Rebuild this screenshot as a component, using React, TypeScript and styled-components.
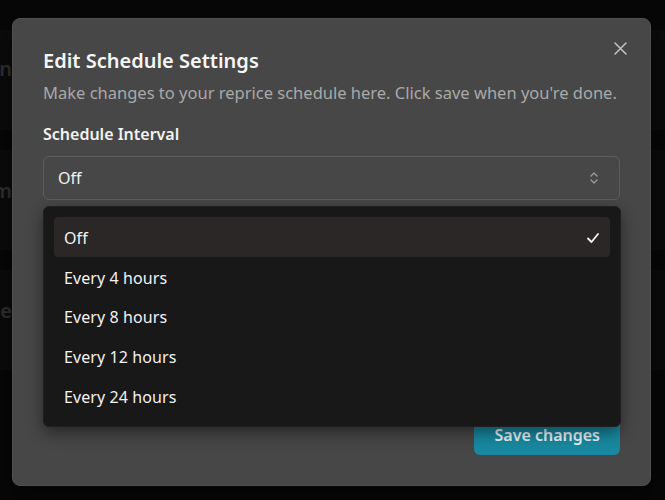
import React from "react";
import styled, { createGlobalStyle } from "styled-components";

const Global = createGlobalStyle`
  html, body { margin: 0; padding: 0; background: #0b0b0b; }
  body { font-family: "Noto Sans", "Open Sans", sans-serif; }
  * { box-sizing: border-box; }
`;

const Page = styled.div`
  position: relative;
  width: 665px;
  height: 500px;
  overflow: hidden;
  background: #0b0b0b;
  display: flex;
  flex-direction: column;
  gap: 20px;
  padding-top: 30px;
`;

const BgCard = styled.div`
  height: 100px;
  background: #121212;
  display: flex;
  align-items: center;
`;

const BgLabel = styled.div<{ $dy: number }>`
  width: 12px;
  overflow: hidden;
  display: flex;
  justify-content: flex-end;
  white-space: nowrap;
  color: #4c4c4c;
  font-size: 20px;
  font-weight: 600;
  margin-top: ${(p) => p.$dy}px;
`;

const Overlay = styled.div`
  position: absolute;
  inset: 0;
  background: rgba(0, 0, 0, 0.35);
`;

const Dialog = styled.div`
  position: absolute;
  left: 12px;
  top: 18px;
  width: 639px;
  height: 468px;
  background: #474747;
  border: 1px solid #505050;
  border-radius: 8px;
  padding: 28px 30px 30px 30px;
  display: flex;
  flex-direction: column;
  color: #f4f4f4;
  box-shadow: 0 10px 30px rgba(0, 0, 0, 0.5);
`;

const Close = styled.button`
  position: absolute;
  right: 22px;
  top: 21px;
  width: 16px;
  height: 16px;
  padding: 0;
  border: none;
  background: transparent;
  color: #c4c4c4;
  display: flex;
  align-items: center;
  justify-content: center;
`;

const Title = styled.h2`
  margin: 0;
  font-size: 20px;
  line-height: 28px;
  font-weight: 600;
  color: #f6f6f6;
`;

const Description = styled.p`
  margin: 6px 0 0 0;
  font-size: 16.5px;
  line-height: 24px;
  color: #a9a9a9;
`;

const Field = styled.div`
  position: relative;
  margin-top: 17px;
  display: flex;
  flex-direction: column;
  gap: 10px;
`;

const Label = styled.label`
  font-size: 16px;
  line-height: 24px;
  font-weight: 600;
  color: #f2f2f2;
`;

const Trigger = styled.button`
  height: 44px;
  width: 100%;
  border: 1px solid #5d5d5d;
  border-radius: 6px;
  background: #474747;
  color: #f2f2f2;
  font-family: inherit;
  font-size: 16px;
  padding: 0 20px 0 14px;
  display: flex;
  align-items: center;
  justify-content: space-between;
`;

const Content = styled.div`
  position: absolute;
  left: 0;
  right: -1px;
  top: 84px;
  height: 221px;
  background: #181818;
  border: 1px solid #202020;
  border-radius: 6px;
  padding: 10px 10px;
  display: flex;
  flex-direction: column;
  box-shadow: 0 6px 16px rgba(0, 0, 0, 0.45);
  z-index: 2;
`;

const Item = styled.div<{ $active?: boolean }>`
  height: 40px;
  border-radius: 4px;
  background: ${(p) => (p.$active ? "#2b2727" : "transparent")};
  display: flex;
  align-items: center;
  justify-content: space-between;
  padding: 2px 10px 0 10px;
  font-size: 16px;
  color: #f2f2f2;
  letter-spacing: 0.1px;
`;

const Body = styled.div`
  flex: 1;
`;

const Footer = styled.div`
  display: flex;
  justify-content: flex-end;
`;

const SaveButton = styled.button`
  height: 40px;
  padding: 0 20px;
  border: none;
  border-radius: 6px;
  background: #1889a0;
  color: #eaf6f8;
  font-family: inherit;
  font-size: 16px;
  font-weight: 600;
`;

const items = ["Off", "Every 4 hours", "Every 8 hours", "Every 12 hours", "Every 24 hours"];

export default function App() {
  return (
    <>
      <Global />
      <Page>
        <BgCard>
          <BgLabel $dy={-24}>Reprice Option</BgLabel>
        </BgCard>
        <BgCard>
          <BgLabel $dy={-20}>Reprice Platform</BgLabel>
        </BgCard>
        <BgCard>
          <BgLabel $dy={-20}>Last Time</BgLabel>
        </BgCard>
        <Overlay />
        <Dialog>
          <Close aria-label="Close">
            <svg width="13" height="13" viewBox="0 0 13 13" fill="none" stroke="currentColor" strokeWidth="1.5" strokeLinecap="round">
              <path d="M1 1L12 12M12 1L1 12" />
            </svg>
          </Close>
          <Title>Edit Schedule Settings</Title>
          <Description>Make changes to your reprice schedule here. Click save when you're done.</Description>
          <Field>
            <Label>Schedule Interval</Label>
            <Trigger>
              <span>Off</span>
              <svg width="10" height="16" viewBox="0 0 10 16" fill="none" stroke="#9a9a9a" strokeWidth="1.4" strokeLinecap="round" strokeLinejoin="round">
                <path d="M2 6L5 3L8 6" />
                <path d="M2 10L5 13L8 10" />
              </svg>
            </Trigger>
            <Content>
              {items.map((it, i) => (
                <Item key={it} $active={i === 0}>
                  <span>{it}</span>
                  {i === 0 && (
                    <svg width="14" height="14" viewBox="0 0 14 14" fill="none" stroke="#f4f4f4" strokeWidth="1.8" strokeLinecap="round" strokeLinejoin="round">
                      <path d="M2 7.5L5.5 11L12 3" />
                    </svg>
                  )}
                </Item>
              ))}
            </Content>
          </Field>
          <Body />
          <Footer>
            <SaveButton>Save changes</SaveButton>
          </Footer>
        </Dialog>
      </Page>
    </>
  );
}
